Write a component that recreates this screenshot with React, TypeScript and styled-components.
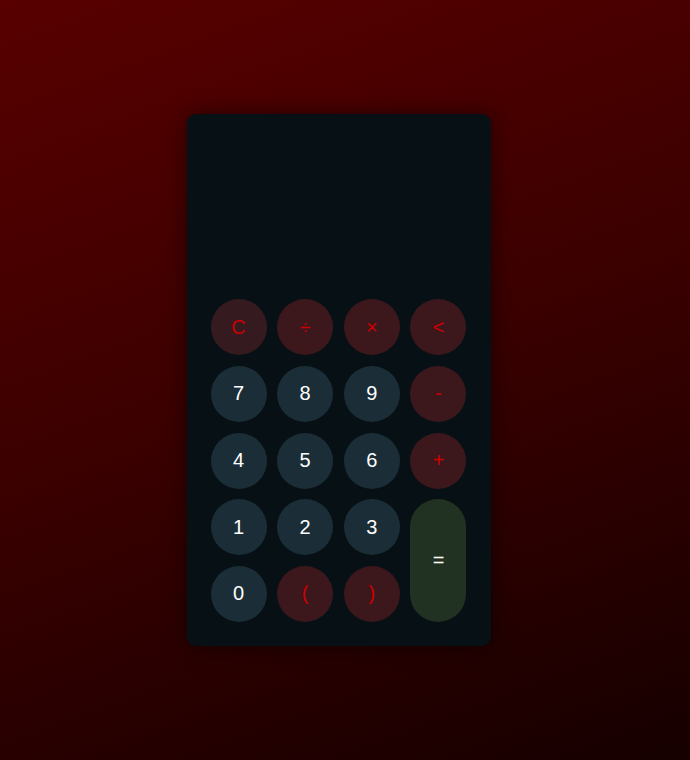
import * as React from "react";
import styled, { createGlobalStyle } from "styled-components";

const GlobalStyle = createGlobalStyle`
  html, body {
    margin: 0;
    padding: 0;
  }
  body {
    font-family: "Liberation Sans", Arial, sans-serif;
  }
`;

const Page = styled.div`
  width: 100%;
  height: 760px;
  padding-right: 13px;
  box-sizing: border-box;
  display: flex;
  align-items: center;
  justify-content: center;
  background: linear-gradient(160deg, #580000 0%, #3a0000 50%, #160000 100%);
`;

const Card = styled.div`
  width: 304px;
  box-sizing: border-box;
  padding: 24px;
  border-radius: 9px;
  background-color: #071014;
  box-shadow: 0 0 22px rgba(0, 0, 0, 0.55);
  display: flex;
  flex-direction: column;
`;

const Display = styled.div`
  height: 161px;
  color: white;
  text-align: right;
  font-size: 32px;
`;

const Keys = styled.div`
  display: grid;
  grid-template-columns: repeat(4, 56px);
  grid-auto-rows: 56px;
  gap: 10.67px;
`;

type Kind = "num" | "op" | "clear" | "equals";

const bgFor: Record<Kind, string> = {
  num: "#1b2e37",
  op: "#3c181d",
  clear: "#351b1f",
  equals: "#223222",
};

const Key = styled.button<{ $kind: Kind; $tall?: boolean }>`
  border: none;
  outline: none;
  padding: 0;
  width: 56px;
  height: 100%;
  border-radius: 28px;
  font-family: "Liberation Sans", Arial, sans-serif;
  font-size: 20px;
  color: ${(p) => (p.$kind === "num" || p.$kind === "equals" ? "#ffffff" : "#cc0000")};
  background-color: ${(p) => bgFor[p.$kind]};
  grid-row: ${(p) => (p.$tall ? "span 2" : "auto")};
  cursor: pointer;
  display: flex;
  align-items: center;
  justify-content: center;
`;

const keys: { label: string; kind: Kind; tall?: boolean }[] = [
  { label: "C", kind: "clear" },
  { label: "÷", kind: "op" },
  { label: "×", kind: "op" },
  { label: "<", kind: "op" },
  { label: "7", kind: "num" },
  { label: "8", kind: "num" },
  { label: "9", kind: "num" },
  { label: "-", kind: "op" },
  { label: "4", kind: "num" },
  { label: "5", kind: "num" },
  { label: "6", kind: "num" },
  { label: "+", kind: "op" },
  { label: "1", kind: "num" },
  { label: "2", kind: "num" },
  { label: "3", kind: "num" },
  { label: "=", kind: "equals", tall: true },
  { label: "0", kind: "num" },
  { label: "(", kind: "op" },
  { label: ")", kind: "op" },
];

export default function App() {
  const [value, setValue] = React.useState("");

  const press = (label: string) => {
    if (label === "C") return setValue("");
    if (label === "<") return setValue((v) => v.slice(0, -1));
    if (label === "=") return;
    setValue((v) => v + label);
  };

  return (
    <>
      <GlobalStyle />
      <Page>
        <Card>
          <Display>{value}</Display>
          <Keys>
            {keys.map((k) => (
              <Key key={k.label} $kind={k.kind} $tall={k.tall} onClick={() => press(k.label)}>
                {k.label}
              </Key>
            ))}
          </Keys>
        </Card>
      </Page>
    </>
  );
}
